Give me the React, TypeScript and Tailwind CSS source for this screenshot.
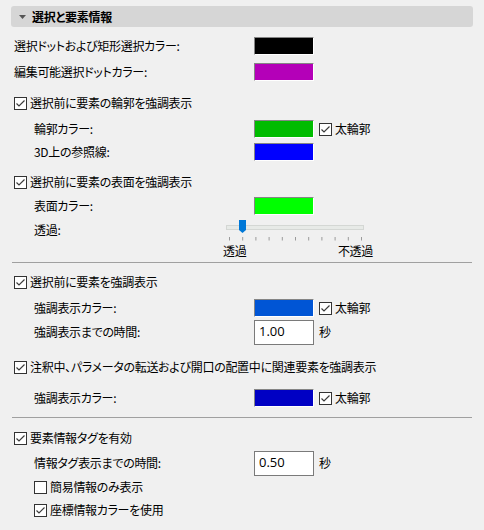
import React from "react";

const FONT = "font-['Noto_Sans_CJK_JP','Noto_Sans',sans-serif] [font-feature-settings:'palt']";

const CheckBox = ({ checked = true }: { checked?: boolean }) => (
  <svg width="13" height="13" viewBox="0 0 13 13" className="shrink-0">
    <rect x="0.5" y="0.5" width="12" height="12" fill="#ffffff" stroke="#333333" />
    {checked && (
      <path d="M2.5 6.5 L5 9 L10.5 3.5" fill="none" stroke="#3c3c3c" strokeWidth="1.2" />
    )}
  </svg>
);

const Check = ({ label, checked = true }: { label: string; checked?: boolean }) => (
  <div className="flex items-center gap-[3px]">
    <CheckBox checked={checked} />
    <span>{label}</span>
  </div>
);

const Swatch = ({ color }: { color: string }) => (
  <div className="h-[18px] w-[60px] border-t border-l border-b border-r border-t-[#858585] border-l-[#858585] border-b-white border-r-white">
    <div className="h-full w-full" style={{ background: color }} />
  </div>
);

const NumInput = ({ value }: { value: string }) => (
  <div className="flex h-[25px] w-[60px] items-center border border-[#7a7a7a] bg-white pl-[4px] font-['Open_Sans',sans-serif] text-[13px] tracking-normal text-black">
    {value}
  </div>
);

// 行: ラベル列 + 値
const Row = ({
  label,
  indent = false,
  children,
  className = "",
}: {
  label: string;
  indent?: boolean;
  children?: React.ReactNode;
  className?: string;
}) => (
  <div className={`flex h-[22px] items-center ${className}`}>
    <div className={`w-[240px] ${indent ? "pl-[20px]" : ""}`}>{label}</div>
    <div className="flex items-center gap-[5px]">{children}</div>
  </div>
);

const Slider = () => {
  const ticks = Array.from({ length: 11 }, (_, i) => 3.5 + i * 13.2);
  return (
    <div className="w-[140px]">
      <svg width="140" height="22" viewBox="0 0 140 22" className="block">
        <rect x="0.5" y="6.5" width="137" height="4" fill="#e7eae7" stroke="#d4d7d4" />
        {ticks.map((x) => (
          <line key={x} x1={x} y1="18" x2={x} y2="21.5" stroke="#9a9a9a" strokeWidth="1" />
        ))}
        <path d="M13 1 H20 V11 L16.5 14 L13 11 Z" fill="#0078d7" />
      </svg>
      <div className="-ml-[3px] mt-[2px] flex w-[150px] justify-between leading-[16px]">
        <span>透過</span>
        <span>不透過</span>
      </div>
    </div>
  );
};

export default function App() {
  return (
    <div className={`h-[530px] w-[484px] overflow-hidden bg-[#f0f0f0] text-[12px] tracking-[-0.3px] text-black ${FONT}`}>
      <div className="mx-[11px] mt-[6px] flex h-[21px] items-center rounded-[3px] bg-[#d6d6d6] pl-[8px]">
        <svg width="7" height="4" viewBox="0 0 7 4">
          <path d="M0 0 H7 L3.5 4 Z" fill="#555555" />
        </svg>
        <span className="ml-[6px] font-bold">選択と要素情報</span>
      </div>

      <div className="pl-[14px]">
        <Row label="選択ドットおよび矩形選択カラー:" className="mt-[8px]">
          <Swatch color="#000000" />
        </Row>
        <Row label="編集可能選択ドットカラー:" className="mt-[4px]">
          <Swatch color="#b400b8" />
        </Row>

        <div className="mt-[9px] flex h-[22px] items-center">
          <Check label="選択前に要素の輪郭を強調表示" />
        </div>
        <Row label="輪郭カラー:" indent className="mt-[4px]">
          <Swatch color="#00bc00" />
          <Check label="太輪郭" />
        </Row>
        <Row label="3D上の参照線:" indent className="mt-[1px]">
          <Swatch color="#0000ff" />
        </Row>

        <div className="mt-[8px] flex h-[22px] items-center">
          <Check label="選択前に要素の表面を強調表示" />
        </div>
        <Row label="表面カラー:" indent className="mt-[2px]">
          <Swatch color="#00ff00" />
        </Row>
        <div className="mt-[2px] flex">
          <div className="w-[212px] pl-[20px] leading-[22px]">透過:</div>
          <Slider />
        </div>
      </div>

      <div className="mx-[12px] mt-[3px] h-px bg-[#a0a0a0]" />

      <div className="pl-[14px]">
        <div className="mt-[8px] flex h-[22px] items-center">
          <Check label="選択前に要素を強調表示" />
        </div>
        <Row label="強調表示カラー:" indent className="mt-[4px]">
          <Swatch color="#0055d5" />
          <Check label="太輪郭" />
        </Row>
        <div className="flex h-[26px] items-center">
          <div className="w-[240px] pl-[20px]">強調表示までの時間:</div>
          <NumInput value="1.00" />
          <span className="ml-[5px]">秒</span>
        </div>

        <div className="mt-[11px] flex h-[22px] items-center">
          <Check label="注釈中、パラメータの転送および開口の配置中に関連要素を強調表示" />
        </div>
        <Row label="強調表示カラー:" indent className="mt-[9px]">
          <Swatch color="#0000c4" />
          <Check label="太輪郭" />
        </Row>
      </div>

      <div className="mx-[12px] mt-[8px] h-px bg-[#a0a0a0]" />

      <div className="pl-[14px]">
        <div className="mt-[9px] flex h-[22px] items-center">
          <Check label="要素情報タグを有効" />
        </div>
        <div className="mt-[1px] flex h-[26px] items-center">
          <div className="w-[240px] pl-[20px]">情報タグ表示までの時間:</div>
          <NumInput value="0.50" />
          <span className="ml-[5px]">秒</span>
        </div>
        <div className="flex h-[22px] items-center pl-[20px]">
          <Check label="簡易情報のみ表示" checked={false} />
        </div>
        <div className="mt-[1px] flex h-[22px] items-center pl-[20px]">
          <Check label="座標情報カラーを使用" />
        </div>
      </div>
    </div>
  );
}
